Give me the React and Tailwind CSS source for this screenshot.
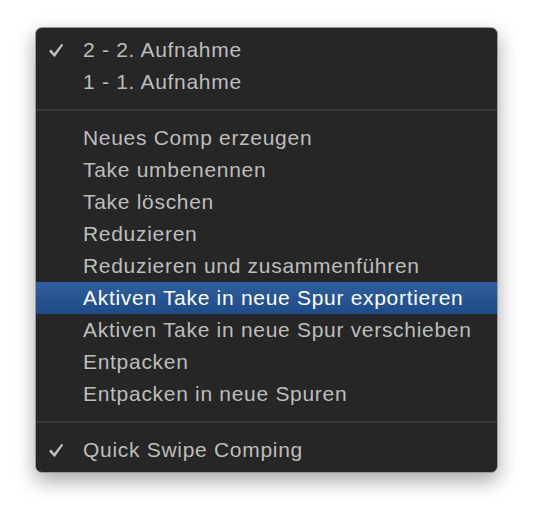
export default function App() {
  const group1 = [
    { label: '2 - 2. Aufnahme', checked: true },
    { label: '1 - 1. Aufnahme' },
  ]
  const group2 = [
    { label: 'Neues Comp erzeugen' },
    { label: 'Take umbenennen' },
    { label: 'Take löschen' },
    { label: 'Reduzieren' },
    { label: 'Reduzieren und zusammenführen' },
    { label: 'Aktiven Take in neue Spur exportieren', active: true },
    { label: 'Aktiven Take in neue Spur verschieben' },
    { label: 'Entpacken' },
    { label: 'Entpacken in neue Spuren' },
  ]
  const group3 = [{ label: 'Quick Swipe Comping', checked: true }]

  return (
    <div className="w-[534px] h-[516px] bg-white pt-[27px] pl-[35px]" style={{ fontFamily: '"Liberation Sans", Arial, sans-serif' }}>
      <div className="w-[463px] h-[446px] rounded-[7px] bg-[#262626] border border-[#9a9a9a] shadow-[0_8px_20px_rgba(0,0,0,0.35)] py-[6px] overflow-hidden">
        {group1.map((it) => <Item key={it.label} {...it} />)}
        <Separator />
        {group2.map((it) => <Item key={it.label} {...it} />)}
        <Separator />
        {group3.map((it) => <Item key={it.label} {...it} />)}
      </div>
    </div>
  )
}

function Check() {
  return (
    <svg width="16" height="15" viewBox="0 0 16 15" className="block">
      <path d="M1 8.2 L3.2 6.6 L6.1 10.2 L13.6 0.8 L15.2 2 L6.6 14.2 Z" fill="#bdbdbd" />
    </svg>
  )
}

function Item({ label, checked, active }) {
  return (
    <div
      className={
        'h-[32px] flex items-center text-[21px] tracking-[0.7px] ' +
        (active ? 'bg-gradient-to-b from-[#2f5f9d] to-[#1f4b86] text-white' : 'text-[#bdbdbd]')
      }
    >
      <span className="w-[47px] shrink-0 pl-[12px] flex items-center">{checked ? <Check /> : null}</span>
      <span className="whitespace-nowrap">{label}</span>
    </div>
  )
}

function Separator() {
  return (
    <div className="h-[24px] flex items-center">
      <div className="w-full h-[2px] bg-[#383838]" />
    </div>
  )
}
